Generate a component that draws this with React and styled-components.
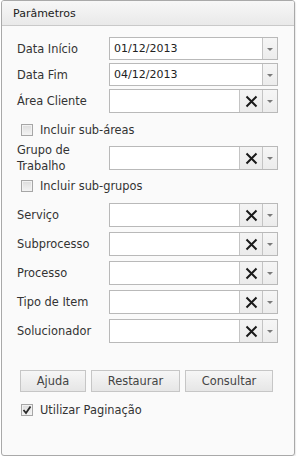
import React from 'react';
import styled, { createGlobalStyle } from 'styled-components';

const GlobalStyle = createGlobalStyle`
  html, body {
    margin: 0;
    padding: 0;
    background: #ffffff;
  }
  body {
    font-family: "DejaVu Sans", Verdana, sans-serif;
    font-size: 11px;
    color: #333;
  }
`;

const Panel = styled.div`
  box-sizing: border-box;
  width: 294px;
  height: 456px;
  margin-left: 1px;
  border: 1px solid #a9a9a9;
  border-radius: 3px;
  background: #fafafa;
  box-shadow: 1px 1px 1px rgba(0, 0, 0, 0.08);
  display: flex;
  flex-direction: column;
  overflow: hidden;
`;

const Header = styled.div`
  height: 24px;
  padding-left: 11px;
  display: flex;
  align-items: center;
  border-bottom: 1px solid #c9c9c9;
  background: linear-gradient(#f7f7f7, #e9e9e9);
  color: #222;
  font-size: 11px;
`;

const Body = styled.div`
  padding: 11px 16px 0 15px;
  display: flex;
  flex-direction: column;
`;

const Row = styled.div`
  display: grid;
  grid-template-columns: 92px 169px;
  grid-template-rows: ${p => p.h}px;
  align-items: center;
  margin-top: ${p => p.gap || 0}px;
`;

const Label = styled.div`
  font-size: 11.4px;
  line-height: 16px;
  color: #333;
`;

const Field = styled.div`
  box-sizing: border-box;
  height: ${p => p.h}px;
  display: flex;
  border: 1px solid #b9b9b9;
  background: #fff;
`;

const Value = styled.div`
  flex: 1;
  display: flex;
  align-items: center;
  padding-left: 4px;
  color: #222;
`;

const ClearButton = styled.div`
  width: 22px;
  display: flex;
  align-items: center;
  justify-content: center;
  border-left: 1px solid #c4c4c4;
  background: linear-gradient(#f4f4f4, #ebebeb);
`;

const ArrowButton = styled.div`
  width: 14px;
  display: flex;
  align-items: center;
  justify-content: center;
  border-left: 1px solid #c4c4c4;
  background: linear-gradient(#f6f6f6, #ececec);
  &::after {
    content: '';
    margin-top: 1px;
    border-left: 3px solid transparent;
    border-right: 3px solid transparent;
    border-top: 3px solid #7a7a7a;
  }
`;

const CheckRow = styled.label`
  display: flex;
  align-items: center;
  height: 16px;
  margin-top: ${p => p.gap || 0}px;
  padding-left: 4px;
  gap: 7px;
  font-size: 11.4px;
  color: #333;
`;

const Box = styled.span`
  box-sizing: border-box;
  width: 12px;
  height: 12px;
  border: 1px solid #a6a6a6;
  background: linear-gradient(#dcdcdc, #f4f4f4);
  box-shadow: inset 0 0 0 1px #f2f2f2;
  display: flex;
  align-items: center;
  justify-content: center;
`;

const Buttons = styled.div`
  display: flex;
  gap: 5px;
  margin-top: ${p => p.gap}px;
  padding-left: 3px;
`;

const Button = styled.div`
  box-sizing: border-box;
  width: ${p => p.w}px;
  height: 22px;
  display: flex;
  align-items: center;
  justify-content: center;
  border: 1px solid #c6c6c6;
  background: linear-gradient(#f6f6f6, #e6e6e6);
  color: #444;
  font-size: 11.4px;
`;

const XIcon = () => (
  <svg width="13" height="13" viewBox="0 0 13 13">
    <path d="M1.5 1.5 L11.5 11.5 M11.5 1.5 L1.5 11.5" stroke="#1a1a1a" strokeWidth="2" />
  </svg>
);

const Check = () => (
  <svg width="10" height="10" viewBox="0 0 10 10">
    <path d="M1.5 5 L4 8 L8.5 1.5" stroke="#2a2a2a" strokeWidth="1.8" fill="none" />
  </svg>
);

const DateRow = ({ label, value, gap }) => (
  <Row gap={gap} h={23}>
    <Label>{label}</Label>
    <Field h={23}>
      <Value>{value}</Value>
      <ArrowButton />
    </Field>
  </Row>
);

const ComboRow = ({ label, gap }) => (
  <Row gap={gap} h={24}>
    <Label>{label}</Label>
    <Field h={24}>
      <Value />
      <ClearButton>
        <XIcon />
      </ClearButton>
      <ArrowButton />
    </Field>
  </Row>
);

const CheckItem = ({ label, checked, gap }) => (
  <CheckRow gap={gap}>
    <Box>{checked && <Check />}</Box>
    {label}
  </CheckRow>
);

export default function App() {
  return (
    <>
      <GlobalStyle />
      <Panel>
        <Header>Parâmetros</Header>
        <Body>
          <DateRow label="Data Início" value="01/12/2013" />
          <DateRow label="Data Fim" value="04/12/2013" gap={3} />
          <ComboRow label="Área Cliente" gap={3} />
          <CheckItem label="Incluir sub-áreas" gap={9} />
          <ComboRow
            label={
              <>
                Grupo de
                <br />
                Trabalho
              </>
            }
            gap={8}
          />
          <CheckItem label="Incluir sub-grupos" gap={8} />
          <ComboRow label="Serviço" gap={9} />
          <ComboRow label="Subprocesso" gap={5} />
          <ComboRow label="Processo" gap={5} />
          <ComboRow label="Tipo de Item" gap={5} />
          <ComboRow label="Solucionador" gap={5} />
          <Buttons gap={27}>
            <Button w={66}>Ajuda</Button>
            <Button w={89}>Restaurar</Button>
            <Button w={88}>Consultar</Button>
          </Buttons>
          <CheckItem label="Utilizar Paginação" checked gap={10} />
        </Body>
      </Panel>
    </>
  );
}
